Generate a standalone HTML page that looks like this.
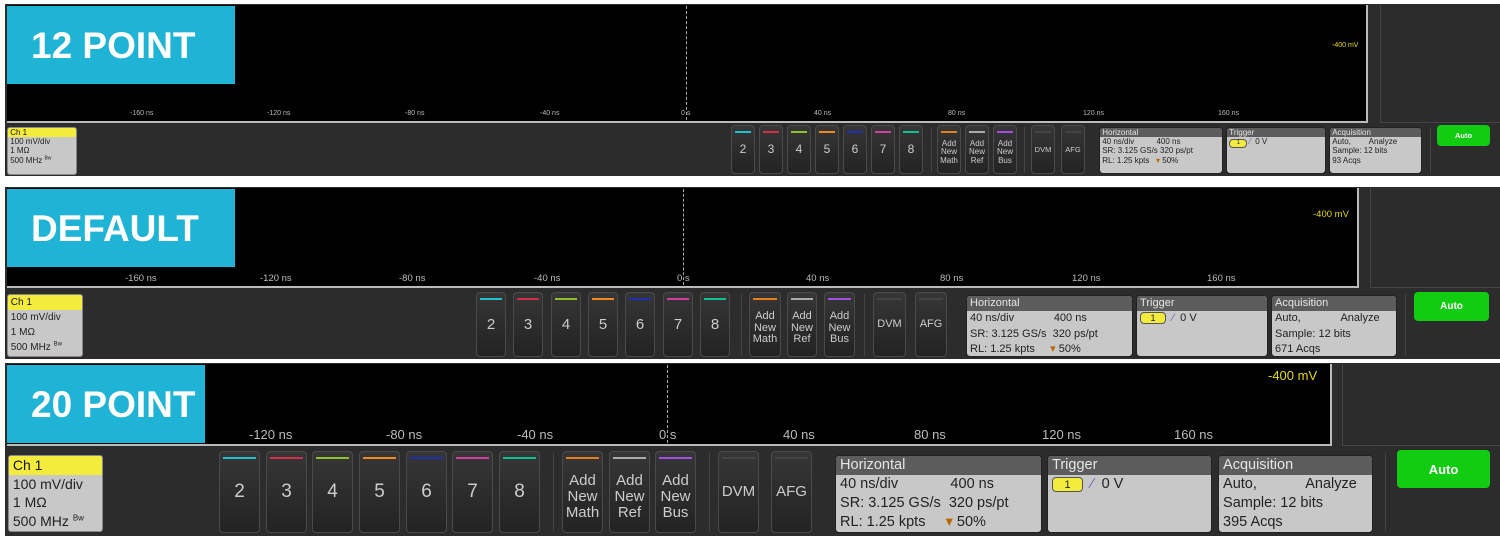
<!DOCTYPE html>
<html><head><meta charset="utf-8"><style>
*{margin:0;padding:0;box-sizing:border-box}
body{width:1500px;height:538px;background:#fff;position:relative;overflow:hidden;font-family:"Liberation Sans",sans-serif}
div{position:absolute}
.frame{background:#2c2c2c}
.wave{background:#000;border-right:2px solid #bbb;border-bottom:2px solid #bbb}
.rp{border-left:1px solid #444;border-bottom:1px solid #444;background:#2c2c2c}
.lbl{background:#1fb3d6;color:#fff;font-weight:bold;font-size:37px;line-height:1;display:flex;align-items:center;padding-left:24px}
.cl{position:absolute;width:1px;border-left:1px dashed #aaa}
.t{color:#bbb;white-space:nowrap}
.mv{color:#e6d800;white-space:nowrap}
.btn{border:1px solid #4a4a4a;border-radius:4px;background:linear-gradient(#363636,#232323);color:#ccc;text-align:center;display:flex;align-items:center;justify-content:center;line-height:1.05}
.btn i{position:absolute;left:3px;right:3px;top:5px;height:2px}
.sep{width:1px;background:#444}
.ch{background:#c8c8c8;border:1px solid #888;border-radius:3px;color:#222;overflow:hidden;line-height:1.2}
.ch b{display:block;background:#f4ec3c;font-weight:normal;color:#111}
.box{background:#c8c8c8;border:1px solid #222;border-radius:4px;overflow:hidden;color:#222;line-height:1.2}
.box .h{position:static;background:#5c5c5c;color:#e6e6e6}
.auto{background:#11cc11;border-radius:4px;color:#fff;font-weight:bold;display:flex;align-items:center;justify-content:center}
.y1{background:#f4ec3c;border:1px solid #555;border-radius:4px;display:inline-block;text-align:center}
</style></head><body>

<!-- PANEL 1 -->
<div class="frame" style="left:5px;top:4px;width:1495px;height:172px"></div>
<div class="wave" style="left:7px;top:5px;width:1361px;height:118px"></div>
<div class="rp" style="left:1380px;top:4px;width:120px;height:119px"></div>
<div class="cl" style="left:686px;top:6px;height:114px"></div>
<div class="lbl" style="left:7px;top:6px;width:228px;height:78px">12 POINT</div>
<div class="t" style="font-size:7px;top:110px;left:130px">-160 ns</div>
<div class="t" style="font-size:7px;top:110px;left:267px">-120 ns</div>
<div class="t" style="font-size:7px;top:110px;left:405px">-80 ns</div>
<div class="t" style="font-size:7px;top:110px;left:540px">-40 ns</div>
<div class="t" style="font-size:7px;top:110px;left:681px">0 s</div>
<div class="t" style="font-size:7px;top:110px;left:814px">40 ns</div>
<div class="t" style="font-size:7px;top:110px;left:948px">80 ns</div>
<div class="t" style="font-size:7px;top:110px;left:1083px">120 ns</div>
<div class="t" style="font-size:7px;top:110px;left:1218px">160 ns</div>
<div class="mv" style="font-size:7px;top:42px;left:1332px">-400 mV</div>
<div class="ch" style="left:7px;top:127px;width:70px;height:48px;font-size:8px;line-height:1.15"><b>&nbsp;Ch 1</b>&nbsp;100 mV/div<br>&nbsp;1 MΩ<br>&nbsp;500 MHz <sup style="font-size:5px">Bw</sup></div>
<div class="btn" style="left:731px;top:125px;width:24px;height:49px;font-size:12px"><i style="background:#20c0d0"></i>2</div>
<div class="btn" style="left:759px;top:125px;width:24px;height:49px;font-size:12px"><i style="background:#d03050"></i>3</div>
<div class="btn" style="left:787px;top:125px;width:24px;height:49px;font-size:12px"><i style="background:#90c030"></i>4</div>
<div class="btn" style="left:815px;top:125px;width:24px;height:49px;font-size:12px"><i style="background:#f08a20"></i>5</div>
<div class="btn" style="left:843px;top:125px;width:24px;height:49px;font-size:12px"><i style="background:#2030b0"></i>6</div>
<div class="btn" style="left:871px;top:125px;width:24px;height:49px;font-size:12px"><i style="background:#d040a0"></i>7</div>
<div class="btn" style="left:899px;top:125px;width:24px;height:49px;font-size:12px"><i style="background:#10c090"></i>8</div>
<div class="sep" style="left:931px;top:127px;height:46px"></div>
<div class="btn" style="left:937px;top:125px;width:24px;height:49px;font-size:8px;padding-top:6px"><i style="background:#e08020"></i>Add<br>New<br>Math</div>
<div class="btn" style="left:965px;top:125px;width:24px;height:49px;font-size:8px;padding-top:6px"><i style="background:#aaa"></i>Add<br>New<br>Ref</div>
<div class="btn" style="left:993px;top:125px;width:24px;height:49px;font-size:8px;padding-top:6px"><i style="background:#a050e0"></i>Add<br>New<br>Bus</div>
<div class="sep" style="left:1024px;top:127px;height:46px"></div>
<div class="btn" style="left:1031px;top:125px;width:24px;height:49px;font-size:7.5px"><i style="background:#444"></i>DVM</div>
<div class="btn" style="left:1061px;top:125px;width:24px;height:49px;font-size:7.5px"><i style="background:#444"></i>AFG</div>
<div class="box" style="left:1099px;top:127px;width:124px;height:47px;font-size:8px;line-height:1.15"><div class="h">&nbsp;Horizontal</div>&nbsp;40 ns/div&nbsp;&nbsp;&nbsp;&nbsp;&nbsp;&nbsp;&nbsp;&nbsp;&nbsp;&nbsp;400 ns<br>&nbsp;SR: 3.125 GS/s&nbsp;320 ps/pt<br>&nbsp;RL: 1.25 kpts&nbsp;&nbsp;&nbsp;<span style="color:#b60">▾</span> 50%</div>
<div class="box" style="left:1226px;top:127px;width:100px;height:47px;font-size:8px;line-height:1.15"><div class="h">&nbsp;Trigger</div>&nbsp;<span class="y1" style="width:18px;height:9px;font-size:6px">1</span> <span style="color:#66a">⁄</span>&nbsp; 0 V</div>
<div class="box" style="left:1329px;top:127px;width:93px;height:47px;font-size:8px;line-height:1.15"><div class="h">&nbsp;Acquisition</div>&nbsp;Auto,&nbsp;&nbsp;&nbsp;&nbsp;&nbsp;&nbsp;&nbsp;&nbsp;Analyze<br>&nbsp;Sample: 12 bits<br>&nbsp;93 Acqs</div>
<div class="sep" style="left:1430px;top:127px;height:46px"></div>
<div class="auto" style="left:1437px;top:125px;width:53px;height:21px;font-size:7.5px">Auto</div>

<!-- PANEL 2 -->
<div class="frame" style="left:5px;top:187px;width:1495px;height:172px"></div>
<div class="wave" style="left:7px;top:188px;width:1352px;height:100px"></div>
<div class="rp" style="left:1370px;top:187px;width:130px;height:101px"></div>
<div class="cl" style="left:683px;top:189px;height:96px"></div>
<div class="lbl" style="left:7px;top:189px;width:228px;height:78px">DEFAULT</div>
<div class="t" style="font-size:9.5px;top:273px;left:125px">-160 ns</div>
<div class="t" style="font-size:9.5px;top:273px;left:260px">-120 ns</div>
<div class="t" style="font-size:9.5px;top:273px;left:399px">-80 ns</div>
<div class="t" style="font-size:9.5px;top:273px;left:534px">-40 ns</div>
<div class="t" style="font-size:9.5px;top:273px;left:677px">0 s</div>
<div class="t" style="font-size:9.5px;top:273px;left:806px">40 ns</div>
<div class="t" style="font-size:9.5px;top:273px;left:940px">80 ns</div>
<div class="t" style="font-size:9.5px;top:273px;left:1072px">120 ns</div>
<div class="t" style="font-size:9.5px;top:273px;left:1207px">160 ns</div>
<div class="mv" style="font-size:9.5px;top:209px;left:1313px">-400 mV</div>
<div class="ch" style="left:7px;top:294px;width:76px;height:63px;font-size:10px;line-height:1.5"><b>&nbsp;Ch 1</b>&nbsp;100 mV/div<br>&nbsp;1 MΩ<br>&nbsp;500 MHz <sup style="font-size:6px">Bw</sup></div>
<div class="btn" style="left:476px;top:292px;width:30px;height:65px;font-size:15px"><i style="background:#20c0d0"></i>2</div>
<div class="btn" style="left:513px;top:292px;width:30px;height:65px;font-size:15px"><i style="background:#d03050"></i>3</div>
<div class="btn" style="left:551px;top:292px;width:30px;height:65px;font-size:15px"><i style="background:#90c030"></i>4</div>
<div class="btn" style="left:588px;top:292px;width:30px;height:65px;font-size:15px"><i style="background:#f08a20"></i>5</div>
<div class="btn" style="left:625px;top:292px;width:30px;height:65px;font-size:15px"><i style="background:#2030b0"></i>6</div>
<div class="btn" style="left:663px;top:292px;width:30px;height:65px;font-size:15px"><i style="background:#d040a0"></i>7</div>
<div class="btn" style="left:700px;top:292px;width:30px;height:65px;font-size:15px"><i style="background:#10c090"></i>8</div>
<div class="sep" style="left:741px;top:294px;height:62px"></div>
<div class="btn" style="left:749px;top:292px;width:32px;height:65px;font-size:11px;padding-top:8px"><i style="background:#e08020"></i>Add<br>New<br>Math</div>
<div class="btn" style="left:787px;top:292px;width:30px;height:65px;font-size:11px;padding-top:8px"><i style="background:#aaa"></i>Add<br>New<br>Ref</div>
<div class="btn" style="left:824px;top:292px;width:31px;height:65px;font-size:11px;padding-top:8px"><i style="background:#a050e0"></i>Add<br>New<br>Bus</div>
<div class="sep" style="left:864px;top:294px;height:62px"></div>
<div class="btn" style="left:873px;top:292px;width:33px;height:65px;font-size:11px"><i style="background:#444"></i>DVM</div>
<div class="btn" style="left:915px;top:292px;width:32px;height:65px;font-size:11px"><i style="background:#444"></i>AFG</div>
<div class="box" style="left:966px;top:295px;width:167px;height:62px;font-size:11px;line-height:1.4"><div class="h">&nbsp;Horizontal</div>&nbsp;40 ns/div&nbsp;&nbsp;&nbsp;&nbsp;&nbsp;&nbsp;&nbsp;&nbsp;&nbsp;&nbsp;&nbsp;&nbsp;&nbsp;400 ns<br>&nbsp;SR: 3.125 GS/s&nbsp; 320 ps/pt<br>&nbsp;RL: 1.25 kpts&nbsp;&nbsp;&nbsp;&nbsp;&nbsp;<span style="color:#b60">▾</span> 50%</div>
<div class="box" style="left:1136px;top:295px;width:132px;height:62px;font-size:11px;line-height:1.4"><div class="h">&nbsp;Trigger</div>&nbsp;<span class="y1" style="width:26px;height:12px;font-size:9px;line-height:11px">1</span>&nbsp; <span style="color:#66a">⁄</span>&nbsp; 0 V</div>
<div class="box" style="left:1271px;top:295px;width:126px;height:62px;font-size:11px;line-height:1.4"><div class="h">&nbsp;Acquisition</div>&nbsp;Auto,&nbsp;&nbsp;&nbsp;&nbsp;&nbsp;&nbsp;&nbsp;&nbsp;&nbsp;&nbsp;&nbsp;&nbsp;&nbsp;Analyze<br>&nbsp;Sample: 12 bits<br>&nbsp;671 Acqs</div>
<div class="sep" style="left:1405px;top:294px;height:62px"></div>
<div class="auto" style="left:1414px;top:292px;width:75px;height:29px;font-size:10px">Auto</div>

<!-- PANEL 3 -->
<div class="frame" style="left:5px;top:363px;width:1495px;height:173px"></div>
<div class="wave" style="left:7px;top:364px;width:1325px;height:82px"></div>
<div class="rp" style="left:1342px;top:363px;width:158px;height:83px"></div>
<div class="cl" style="left:667px;top:365px;height:78px"></div>
<div class="lbl" style="left:7px;top:365px;width:198px;height:78px;padding-left:24px">20 POINT</div>
<div class="t" style="font-size:13px;top:427px;left:249px">-120 ns</div>
<div class="t" style="font-size:13px;top:427px;left:386px">-80 ns</div>
<div class="t" style="font-size:13px;top:427px;left:517px">-40 ns</div>
<div class="t" style="font-size:13px;top:427px;left:659px">0 s</div>
<div class="t" style="font-size:13px;top:427px;left:783px">40 ns</div>
<div class="t" style="font-size:13px;top:427px;left:914px">80 ns</div>
<div class="t" style="font-size:13px;top:427px;left:1042px">120 ns</div>
<div class="t" style="font-size:13px;top:427px;left:1174px">160 ns</div>
<div class="mv" style="font-size:13px;top:368px;left:1268px">-400 mV</div>
<div class="ch" style="left:8px;top:455px;width:95px;height:77px;font-size:14px;line-height:1.33"><b>&nbsp;Ch 1</b>&nbsp;100 mV/div<br>&nbsp;1 MΩ<br>&nbsp;500 MHz <sup style="font-size:8px">Bw</sup></div>
<div class="btn" style="left:219px;top:451px;width:41px;height:82px;font-size:19px"><i style="background:#20c0d0"></i>2</div>
<div class="btn" style="left:266px;top:451px;width:41px;height:82px;font-size:19px"><i style="background:#d03050"></i>3</div>
<div class="btn" style="left:312px;top:451px;width:41px;height:82px;font-size:19px"><i style="background:#90c030"></i>4</div>
<div class="btn" style="left:359px;top:451px;width:41px;height:82px;font-size:19px"><i style="background:#f08a20"></i>5</div>
<div class="btn" style="left:406px;top:451px;width:41px;height:82px;font-size:19px"><i style="background:#2030b0"></i>6</div>
<div class="btn" style="left:452px;top:451px;width:41px;height:82px;font-size:19px"><i style="background:#d040a0"></i>7</div>
<div class="btn" style="left:499px;top:451px;width:41px;height:82px;font-size:19px"><i style="background:#10c090"></i>8</div>
<div class="sep" style="left:553px;top:453px;height:78px"></div>
<div class="btn" style="left:562px;top:451px;width:41px;height:82px;font-size:15px;padding-top:10px"><i style="background:#e08020"></i>Add<br>New<br>Math</div>
<div class="btn" style="left:609px;top:451px;width:41px;height:82px;font-size:15px;padding-top:10px"><i style="background:#aaa"></i>Add<br>New<br>Ref</div>
<div class="btn" style="left:655px;top:451px;width:41px;height:82px;font-size:15px;padding-top:10px"><i style="background:#a050e0"></i>Add<br>New<br>Bus</div>
<div class="sep" style="left:709px;top:453px;height:78px"></div>
<div class="btn" style="left:718px;top:451px;width:41px;height:82px;font-size:15px"><i style="background:#444"></i>DVM</div>
<div class="btn" style="left:771px;top:451px;width:41px;height:82px;font-size:15px"><i style="background:#444"></i>AFG</div>
<div class="box" style="left:835px;top:455px;width:207px;height:78px;font-size:14.5px;line-height:1.3"><div class="h">&nbsp;Horizontal</div>&nbsp;40 ns/div&nbsp;&nbsp;&nbsp;&nbsp;&nbsp;&nbsp;&nbsp;&nbsp;&nbsp;&nbsp;&nbsp;&nbsp;&nbsp;400 ns<br>&nbsp;SR: 3.125 GS/s&nbsp;&nbsp;320 ps/pt<br>&nbsp;RL: 1.25 kpts&nbsp;&nbsp;&nbsp;&nbsp;&nbsp;<span style="color:#b60">▾</span> 50%</div>
<div class="box" style="left:1047px;top:455px;width:165px;height:78px;font-size:14.5px;line-height:1.3"><div class="h">&nbsp;Trigger</div>&nbsp;<span class="y1" style="width:31px;height:15px;font-size:11px;line-height:14px">1</span>&nbsp; <span style="color:#66a">⁄</span>&nbsp; 0 V</div>
<div class="box" style="left:1218px;top:455px;width:155px;height:78px;font-size:14.5px;line-height:1.3"><div class="h">&nbsp;Acquisition</div>&nbsp;Auto,&nbsp;&nbsp;&nbsp;&nbsp;&nbsp;&nbsp;&nbsp;&nbsp;&nbsp;&nbsp;&nbsp;&nbsp;Analyze<br>&nbsp;Sample: 12 bits<br>&nbsp;395 Acqs</div>
<div class="sep" style="left:1385px;top:453px;height:78px"></div>
<div class="auto" style="left:1397px;top:450px;width:93px;height:38px;font-size:13px">Auto</div>
</body></html>
